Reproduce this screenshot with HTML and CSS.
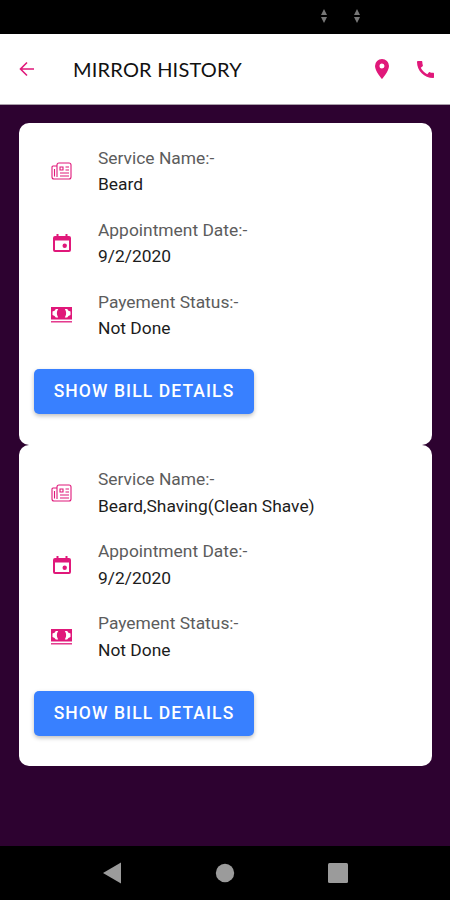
FILE: index.html
```html
<!DOCTYPE html>
<html lang="en">
<head>
    <meta charset="UTF-8">
    <meta name="viewport" content="width=device-width, initial-scale=1.0">
    <title>Mirror History</title>
    <link rel="stylesheet" href="styles.css">
</head>
<body>

<!-- Icons shared by the cards -->
<svg class="sprite" width="0" height="0">
    <symbol id="icon-news" viewBox="0 0 21 18">
        <path d="M6 15V3q0-2 2-2h10q2 0 2 2v12q0 2-2 2H3q-2 0-2-2V5q0-1 1-1h4M3.500 7v7.500M9 5h3v3H9zM14.500 5H18M14.500 8H18M9 11h9M9 14h9" fill="none" stroke="currentColor" stroke-width="1.100"/>
    </symbol>
    <symbol id="icon-calendar" viewBox="0 0 18 18">
        <path d="M3.500 0h2v2h7V0h2v2H16q2 0 2 2v12q0 2-2 2H2q-2 0-2-2V4q0-2 2-2h1.500zM2 6.500V16h14V6.500z" fill="currentColor" fill-rule="evenodd"/>
        <circle cx="11.700" cy="11.800" r="2.200" fill="currentColor"/>
    </symbol>
    <symbol id="icon-cash" viewBox="0 0 21 16">
        <path d="M0 0h21v12.500H0z" fill="currentColor"/>
        <path d="M4.800 2h2.400q-2.800 4.200 0 8.500H4.800Q4 8.500 1.500 8V4.500Q4 4 4.800 2zM16.200 2h-2.400q2.800 4.200 0 8.500h2.400q.8-2 3.300-2.500V4.500Q17 4 16.200 2z" fill="#fff"/>
        <path d="M0 14.800h21" stroke="currentColor" stroke-width="1.300"/>
    </symbol>
</svg>

<div class="status-bar">
    <svg width="6" height="14" viewBox="0 0 6 14"><path d="M0 6l3-6 3 6zM0 8h6l-3 6z" fill="#777"/></svg>
    <svg width="6" height="14" viewBox="0 0 6 14"><path d="M0 6l3-6 3 6zM0 8h6l-3 6z" fill="#777"/></svg>
</div>

<header class="header">
    <svg class="back" width="16" height="16" viewBox="0 0 16 16"><path d="M15 8H2M8 1.500L1.500 8 8 14.500" fill="none" stroke="currentColor" stroke-width="1.600"/></svg>
    <h1>MIRROR HISTORY</h1>
    <svg class="pin" width="14" height="20" viewBox="0 0 14 20"><path d="M7 0a7 7 0 0 0-7 7c0 5.200 7 13 7 13s7-7.800 7-13a7 7 0 0 0-7-7zm0 9.500a2.500 2.500 0 1 1 0-5 2.500 2.500 0 0 1 0 5z" fill="currentColor"/></svg>
    <svg class="phone" width="17" height="17" viewBox="3 3 18 18"><path d="M20.010 15.380c-1.230 0-2.420-.2-3.530-.56-.35-.12-.74-.03-1.010.24l-1.570 1.970c-2.830-1.350-5.480-3.900-6.890-6.830l1.950-1.660c.27-.28.35-.67.24-1.020-.37-1.110-.56-2.300-.56-3.530 0-.54-.45-.99-.99-.99H4.190C3.650 3 3 3.240 3 3.990 3 13.280 10.730 21 20.010 21c.71 0 .99-.63.99-1.180v-3.450c0-.54-.45-.99-.99-.99z" fill="currentColor"/></svg>
</header>

<main class="content">

    <div class="card">
        <div class="item">
            <svg class="icon" width="21" height="18"><use href="#icon-news"/></svg>
            <div>
                <p class="label">Service Name:-</p>
                <p class="value">Beard</p>
            </div>
        </div>
        <div class="item">
            <svg class="icon" width="18" height="18"><use href="#icon-calendar"/></svg>
            <div>
                <p class="label">Appointment Date:-</p>
                <p class="value">9/2/2020</p>
            </div>
        </div>
        <div class="item">
            <svg class="icon" width="21" height="16"><use href="#icon-cash"/></svg>
            <div>
                <p class="label">Payement Status:-</p>
                <p class="value">Not Done</p>
            </div>
        </div>
        <button type="button">SHOW BILL DETAILS</button>
    </div>

    <div class="card">
        <div class="item">
            <svg class="icon" width="21" height="18"><use href="#icon-news"/></svg>
            <div>
                <p class="label">Service Name:-</p>
                <p class="value">Beard,Shaving(Clean Shave)</p>
            </div>
        </div>
        <div class="item">
            <svg class="icon" width="18" height="18"><use href="#icon-calendar"/></svg>
            <div>
                <p class="label">Appointment Date:-</p>
                <p class="value">9/2/2020</p>
            </div>
        </div>
        <div class="item">
            <svg class="icon" width="21" height="16"><use href="#icon-cash"/></svg>
            <div>
                <p class="label">Payement Status:-</p>
                <p class="value">Not Done</p>
            </div>
        </div>
        <button type="button">SHOW BILL DETAILS</button>
    </div>

</main>

<nav class="nav-bar">
    <svg width="20" height="22" viewBox="0 0 20 22"><path d="M1 11L19 .5v21z" fill="currentColor"/></svg>
    <svg width="20" height="20" viewBox="0 0 20 20"><circle cx="10" cy="10" r="9.200" fill="currentColor"/></svg>
    <svg width="20" height="20" viewBox="0 0 20 20"><rect width="20" height="20" rx="1.500" fill="currentColor"/></svg>
</nav>

</body>
</html>
```
FILE: styles.css
```css
* {
    box-sizing: border-box;
}

body {
    font-family: Roboto, sans-serif;
    background-color: #2d0230;
    color: #1c1c1c;
    margin: 0;
    height: 900px;
    display: flex;
    flex-direction: column;
}

h1, p {
    margin: 0;
}

svg {
    display: block;
    flex-shrink: 0;
}

.sprite {
    position: absolute;
}

.status-bar {
    height: 34px;
    flex-shrink: 0;
    background-color: #000;
    display: flex;
    justify-content: flex-end;
    gap: 27px;
    padding: 9px 90px 0 0;
}

.header {
    height: 71px;
    flex-shrink: 0;
    background-color: #fff;
    color: #e0187a;
    border-bottom: 1px solid #aaa0ab;
    display: flex;
    align-items: center;
    padding: 0 16px 0 19px;
}

.header h1 {
    flex: 1;
    margin-left: 38px;
    font-family: Lato, sans-serif;
    font-size: 20px;
    font-weight: 400;
    letter-spacing: 0.200px;
    color: #111;
}

.header .phone {
    margin-left: 28px;
}

.content {
    flex: 1;
    padding: 18px 18px 0 19px;
}

.card {
    height: 321.500px;
    background-color: #fff;
    border-radius: 10px;
    padding: 12px 15px;
}

.item {
    height: 72px;
    display: grid;
    grid-template-columns: 55px 1fr;
    align-items: center;
    column-gap: 9px;
}

.icon {
    justify-self: center;
    color: #e0187a;
}

.label, .value {
    font-size: 17.400px;
    line-height: 26.500px;
}

.label {
    color: #5c5c5c;
}

button {
    display: block;
    width: 220px;
    height: 45px;
    margin-top: 18px;
    padding: 0 0 1px;
    border: none;
    border-radius: 5px;
    background-color: #3880ff;
    color: #fff;
    font-family: Roboto, sans-serif;
    font-size: 17.500px;
    font-weight: 500;
    letter-spacing: 1.100px;
    box-shadow: 0 2px 4px rgba(0, 0, 0, 0.25);
}

.nav-bar {
    height: 54px;
    flex-shrink: 0;
    background-color: #000;
    color: #9b9b9b;
    display: flex;
    justify-content: space-between;
    align-items: center;
    padding: 0 102px;
}
```
